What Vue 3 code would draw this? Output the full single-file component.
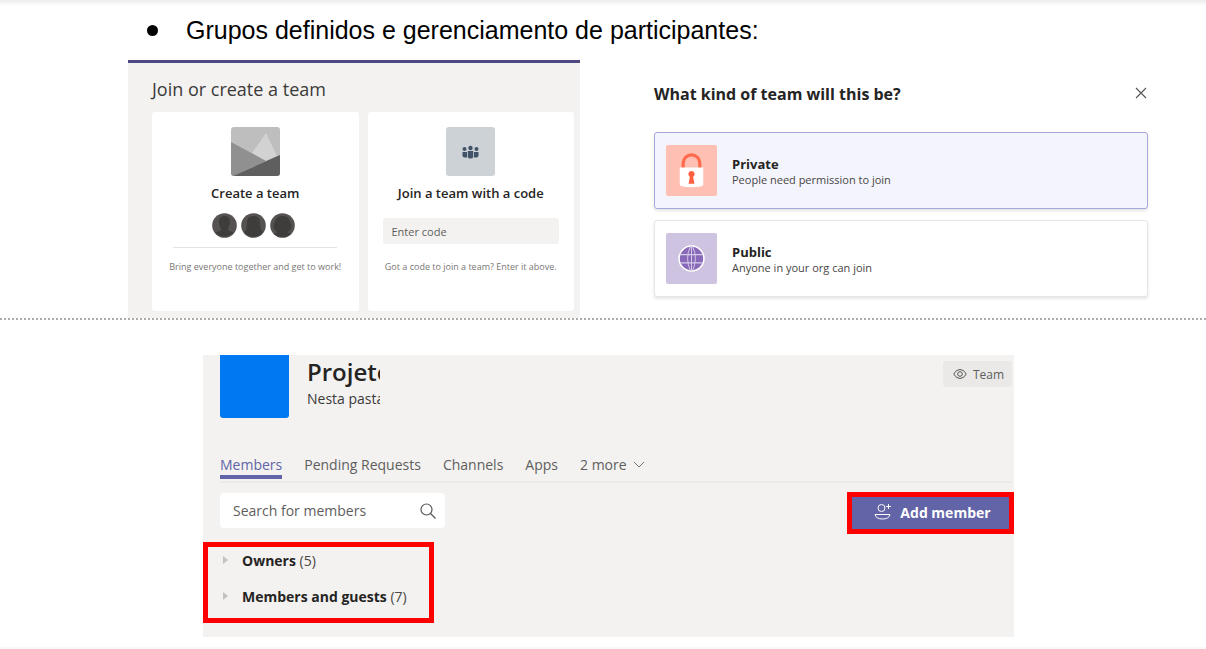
<script setup>
import { ref } from 'vue'

const code = ref('')
const search = ref('')
const kind = ref('Private')
const tab = ref('Members')
const tabs = ['Members', 'Pending Requests', 'Channels', 'Apps']
const groups = [
  { name: 'Owners', count: 5 },
  { name: 'Members and guests', count: 7 }
]
</script>

<template>
  <main class="page">
    <ul class="topic">
      <li><span class="dot"></span><h1>Grupos definidos e gerenciamento de participantes:</h1></li>
    </ul>

    <div class="upper">
      <section class="join">
        <h2>Join or create a team</h2>
        <div class="cards">
          <article class="card">
            <svg class="art" viewBox="0 0 49 49" aria-hidden="true">
              <path fill="#bebebe" d="M0 0h49v49H0z" />
              <path fill="#d2d2d2" d="M35 6 21 26l14 8 11-5z" />
              <path fill="#909090" d="M0 15 35 34 2 49H0z" />
              <path fill="#5f5f5f" d="M2 49 49 28v21z" />
            </svg>
            <h3>Create a team</h3>
            <div class="people">
              <svg viewBox="0 0 25 25" aria-hidden="true">
                <circle cx="12.500" cy="12.500" r="12.300" fill="#555251" />
                <path fill="#3f3d3b" d="M12.500 3c4 0 6 3 5.500 7-.3 3-1.500 4-2 5.500v2c2 1 4 1 5.500 2a12 12 0 0 1-18 0c1.500-1 3.500-1 5.500-2v-2C8.500 14 7.300 13 7 10c-.500-4 1.500-7 5.500-7z" />
              </svg>
              <svg viewBox="0 0 25 25" aria-hidden="true">
                <circle cx="12.500" cy="12.500" r="12.300" fill="#555251" />
                <path fill="#3f3d3b" d="M12.500 3c5 0 6.500 3 6.500 7 0 3 .5 5 1 7l2 2a12 12 0 0 1-19 0l2-2c.5-2 1-4 1-7 0-4 1.500-7 6.500-7z" />
              </svg>
              <svg viewBox="0 0 25 25" aria-hidden="true">
                <circle cx="12.500" cy="12.500" r="12.300" fill="#555251" />
                <path fill="#3f3d3b" d="M12.500 3c5 0 7 2.500 7.500 6 2 2 2 6 0 8-1 1.500-2 2-3 2l4 1.500a12 12 0 0 1-17 0L8 19c-1 0-2-.5-3-2-2-2-2-6 0-8 .5-3.500 2.500-6 7.500-6z" />
              </svg>
            </div>
            <hr />
            <p>Bring everyone together and get to work!</p>
          </article>
          <article class="card">
            <svg class="art" viewBox="0 0 49 49" aria-hidden="true">
              <path fill="#cdd2d6" d="M0 0h49v49H0z" />
              <g fill="#425268">
                <circle cx="18.500" cy="22" r="2" />
                <circle cx="30.500" cy="22" r="2" />
                <circle cx="24.500" cy="21" r="2.200" />
                <path d="M16.500 25H21v5.500h-2.500q-2 0-2-2zM28 25h4.500v3.500q0 2-2 2H28zM21.800 24h5.400v6q0 1.500-2.700 1.500T21.800 30z" />
              </g>
            </svg>
            <h3>Join a team with a code</h3>
            <input v-model="code" class="code" type="text" placeholder="Enter code" aria-label="Enter code" />
            <p>Got a code to join a team? Enter it above.</p>
          </article>
        </div>
      </section>

      <section class="kind">
        <header>
          <h2>What kind of team will this be?</h2>
          <button class="close" type="button" aria-label="Close">
            <svg width="12" height="12" viewBox="0 0 12 12"><path d="m1 1 10 10m0-10-10 10" fill="none" stroke="#555" stroke-width="1.100" /></svg>
          </button>
        </header>
        <button class="choice" :class="{ chosen: kind === 'Private' }" type="button" @click="kind = 'Private'">
          <svg viewBox="0 0 52 52" aria-hidden="true">
            <rect width="52" height="52" rx="2" fill="#ffbfb3" />
            <path d="M17.500 24v-5.500a8.500 8.500 0 0 1 17 0V24" fill="none" stroke="#ff6a4d" stroke-width="3.200" />
            <path d="M14 23h24v17.500q0 2.500-12 2.500t-12-2.500z" fill="#fff" />
            <path d="M26 26.500a3.300 3.300 0 0 1 1.700 6.100L29 39.500h-6l1.300-6.900A3.300 3.300 0 0 1 26 26.500z" fill="#ff6040" />
          </svg>
          <span><strong>Private</strong><small>People need permission to join</small></span>
        </button>
        <button class="choice" :class="{ chosen: kind === 'Public' }" type="button" @click="kind = 'Public'">
          <svg viewBox="0 0 52 52" aria-hidden="true">
            <rect width="52" height="52" rx="2" fill="#cec3e0" />
            <circle cx="26" cy="26" r="12.700" fill="#8769b8" stroke="#fff" stroke-width="1.600" />
            <path d="M14.500 22h23M14.500 30.500h23" fill="none" stroke="#d8cce9" stroke-width="1.200" />
            <path d="M25 13.500q-6 12.500 0 25M27 13.500q6 12.500 0 25M26 13.500v25" fill="none" stroke="#d8cce9" stroke-width="1" />
          </svg>
          <span><strong>Public</strong><small>Anyone in your org can join</small></span>
        </button>
      </section>
    </div>

    <section class="team">
      <header class="identity">
        <div class="avatar"></div>
        <div class="names">
          <h2>Projeto</h2>
          <p>Nesta pasta</p>
        </div>
        <button class="badge" type="button">
          <svg width="14" height="12" viewBox="0 0 14 12" fill="none" stroke="#555" aria-hidden="true">
            <path d="M.700 6Q3 1.500 7 1.500T13.300 6Q11 10.500 7 10.500T.700 6z" />
            <circle cx="7" cy="6" r="2.300" />
          </svg>
          Team
        </button>
      </header>

      <nav class="tabs">
        <button v-for="t in tabs" :key="t" type="button" :class="{ active: t === tab }" @click="tab = t">{{ t }}</button>
        <button type="button">2 more
          <svg width="12" height="8" viewBox="0 0 12 8" aria-hidden="true"><path d="m1 1 5 5 5-5" fill="none" stroke="#777" /></svg>
        </button>
      </nav>

      <div class="tools">
        <div class="search">
          <input v-model="search" type="text" placeholder="Search for members" aria-label="Search for members" />
          <svg width="18" height="18" viewBox="0 0 18 18" aria-hidden="true">
            <circle cx="7.500" cy="7.500" r="5.500" fill="none" stroke="#555" stroke-width="1.200" />
            <path d="m11.500 11.500 5 5" stroke="#555" stroke-width="1.300" />
          </svg>
        </div>
        <div class="mark add">
          <button type="button">
            <svg width="18" height="18" viewBox="0 0 18 18" fill="none" stroke="#fff" aria-hidden="true">
              <circle cx="7.500" cy="5" r="3.500" />
              <path d="M12 3.500h5M14.500 1v5M1 11.500h15q-1 4.500-7.500 4.500T1 11.500z" />
            </svg>
            Add member
          </button>
        </div>
      </div>

      <div class="mark groups">
        <button v-for="g in groups" :key="g.name" type="button">
          <svg width="5" height="8" viewBox="0 0 5 8" aria-hidden="true"><path d="m0 0 5 4-5 4z" fill="#c4c2c0" /></svg>
          <span><strong>{{ g.name }}</strong> ({{ g.count }})</span>
        </button>
      </div>
    </section>
  </main>
</template>

<style>
body { margin: 0; background: #fff; }
</style>

<style scoped>
* { box-sizing: border-box; }
h1, h2, h3, p, ul { margin: 0; padding: 0; font-weight: 400; }
button, input { font: inherit; border: 0; margin: 0; padding: 0; background: none; color: inherit; }
button { cursor: pointer; }
svg { display: block; flex: none; }
.page {
  font-family: "Open Sans", "Noto Sans", sans-serif;
  color: #252423;
  background: linear-gradient(#ededed, #fff) top / 100% 6px no-repeat;
  padding-bottom: 10px;
  border-bottom: 2px solid #f8f8f8;
}
.topic { list-style: none; padding: 15px 0 15px 147px; }
.topic li { display: flex; align-items: center; gap: 28px; }
.dot { width: 11px; height: 11px; border-radius: 50%; background: #000; }
h1 { font: 25px/30px "Liberation Sans", Arial, sans-serif; color: #000; }

.upper {
  display: grid;
  grid-template-columns: 452fr 494fr;
  column-gap: 74px;
  padding: 0 58px 0 128px;
  border-bottom: 2px dotted #aaa;
}
.join { background: #f3f2f1; border-top: 3px solid #4c4a80; padding: 14px 6px 7px 24px; }
.join h2 { font-size: 18px; line-height: 24px; color: #3b3a39; }
.cards { display: grid; grid-template-columns: 1fr 1fr; gap: 9px; margin-top: 11px; }
.card {
  display: flex; flex-direction: column; align-items: center;
  background: #fff; border-radius: 3px; padding: 15px 15px 37px;
}
.art { width: 49px; height: 49px; border-radius: 3px; }
.card h3 { font-size: 13px; line-height: 18px; font-weight: 600; margin-top: 8px; }
.people { display: flex; gap: 4px; margin-top: 11px; margin-right: 4px; }
.people svg { width: 25px; height: 25px; }
.card hr { width: 164px; margin: 9px 0 12px; border: 0; border-top: 1px solid #e4e4e4; }
.card p { font-size: 9px; line-height: 14px; margin-top: auto; color: #797775; white-space: nowrap; }
.code { width: 100%; height: 26px; margin-top: 16px; padding: 0 9px; border-radius: 3px; background: #f3f2f1; font-size: 11px; }
.code::placeholder { color: #605e5c; opacity: 1; }

.kind { padding-top: 22px; }
.kind header { display: flex; align-items: center; justify-content: space-between; margin-bottom: 26px; padding-right: 1px; }
.kind h2 { font-size: 16px; line-height: 24px; font-weight: 700; }
.close { display: block; padding-bottom: 2px; }
.choice {
  display: flex; align-items: center; gap: 15px; width: 100%; height: 77px;
  padding: 0 11px; margin-bottom: 11px; text-align: left;
  border: 1px solid #e6e6e6; border-radius: 3px; background: #fff;
  box-shadow: 0 2px 3px rgba(0, 0, 0, 0.1);
}
.choice.chosen { background: #f4f4fd; border-color: #a6a7dc; }
.choice svg { width: 51px; height: 51px; }
.choice span { padding-top: 2px; }
.choice strong, .choice small { display: block; line-height: 16px; }
.choice strong { font-size: 13px; font-weight: 700; }
.choice small { font-size: 11px; color: #484644; }

.team { margin: 35px 192px 0 203px; background: #f3f2f1; padding-bottom: 14px; }
.identity { display: flex; align-items: flex-start; padding: 0 2px 0 17px; }
.avatar { width: 69px; height: 63px; background: #0078f2; border-radius: 0 0 3px 3px; }
.names { width: 73px; margin-left: 18px; overflow: hidden; white-space: nowrap; }
.names h2 { font-size: 24px; line-height: 34px; font-weight: 600; }
.names p { font-size: 14px; line-height: 20px; color: #3b3a39; }
.badge {
  display: flex; align-items: center; gap: 6px; height: 26px; margin: 6px 0 0 auto; padding: 0 8px 0 10px;
  background: #eae9e8; border-radius: 3px; font-size: 12px; color: #605e5c;
}
.tabs { display: flex; gap: 22px; margin: 36px 2px 0 17px; border-bottom: 2px solid #edebe9; }
.tabs button { display: flex; align-items: center; gap: 6px; height: 25px; padding-bottom: 4px; margin-bottom: 2px; font-size: 14px; line-height: 20px; color: #605e5c; white-space: nowrap; }
.tabs .active { color: #6264a7; box-shadow: inset 0 -4px #6264a7; }
.tools { display: flex; justify-content: space-between; align-items: flex-start; margin-top: 9px; padding-left: 17px; }
.search { display: flex; align-items: center; width: 225px; height: 35px; margin-top: 1px; padding: 0 8px 0 13px; background: #fff; border-radius: 4px; }
.search input { flex: 1; min-width: 0; font-size: 14px; }
.search input::placeholder { color: #605e5c; opacity: 1; }
.mark { border: 5px solid #f00; }
.add button {
  display: flex; align-items: center; justify-content: center; gap: 8px; width: 157px; height: 32px;
  padding: 0 0 2px 4px; background: #6264a7; color: #fff; font-size: 14px; font-weight: 700; white-space: nowrap;
}
.groups { display: flex; flex-direction: column; align-items: flex-start; gap: 10px; width: 231px; margin-top: 8px; padding: 0 0 9px 15px; }
.groups button { display: flex; align-items: center; gap: 14px; height: 26px; font-size: 14px; color: #484644; white-space: nowrap; }
.groups strong { font-weight: 700; color: #252423; }
</style>
